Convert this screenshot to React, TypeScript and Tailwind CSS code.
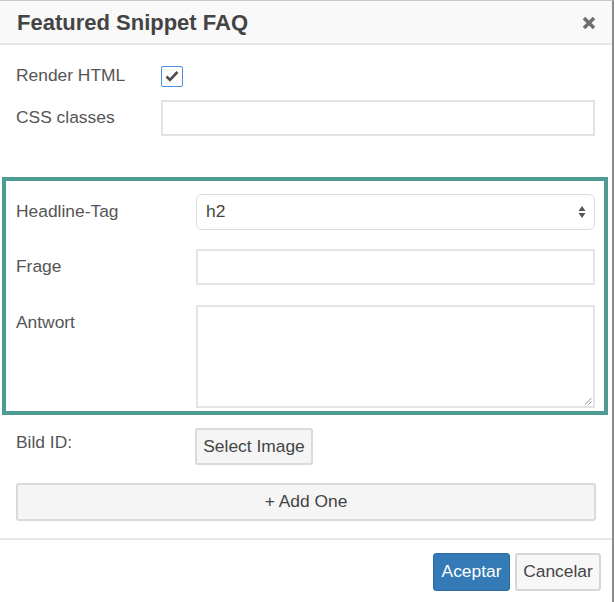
import React from "react";

const font = { fontFamily: '"Liberation Sans", Arial, Helvetica, sans-serif' };

export default function App() {
  return (
    <div
      className="w-[614px] h-[602px] bg-white border-t border-t-[#c9c9c9] border-r-2 border-r-[#8c8c8c] text-[#555] flex flex-col"
      style={font}
    >
      {/* header */}
      <div className="h-[44px] bg-[#f9f9f9] border-b-2 border-[#e6e6e6] flex items-center justify-between pl-[17px] pr-[16px] shrink-0">
        <h1 className="text-[22px] font-bold text-[#444] leading-none pt-[2px]">Featured Snippet FAQ</h1>
        <svg width="14" height="14" viewBox="0 0 14 14" className="mt-[1px]">
          <path d="M2 2 L12 12 M12 2 L2 12" stroke="#707070" strokeWidth="3.6" strokeLinecap="butt" />
        </svg>
      </div>

      {/* body */}
      <div className="flex flex-col pt-[20px]">
        <div className="flex items-center h-[22px] pl-[16px]">
          <label className="w-[145px] text-[17.4px] leading-none">Render HTML</label>
          <div className="w-[22px] h-[21px] border-[1.5px] border-[#4a90e2] rounded-[2px] flex items-center justify-center">
            <svg width="14" height="12" viewBox="0 0 14 12">
              <path d="M1.5 6.5 L5 10 L12.5 2" fill="none" stroke="#4d4d4d" strokeWidth="2.6" />
            </svg>
          </div>
        </div>

        <div className="flex items-center pl-[16px] mt-[13px]">
          <label className="w-[145px] text-[17.4px] leading-none">CSS classes</label>
          <div className="w-[434px] h-[36px] border-2 border-[#e2e2e2] bg-white" />
        </div>

        {/* teal box */}
        <div className="mt-[41px] ml-[2px] w-[606px] border-4 border-[#4e9d94] pt-[13px] pb-[3px] pl-[10px] pr-[9px] flex flex-col">
          <div className="flex items-start">
            <label className="w-[180px] h-[36px] flex items-center text-[17.4px] leading-none">Headline-Tag</label>
            <div className="w-[399px] h-[36px] border border-[#dcdcdc] rounded-[6px] flex items-center justify-between pl-[9px] pr-[8px] bg-white">
              <span className="text-[17.4px] text-[#444] leading-none">h2</span>
              <svg width="8" height="14" viewBox="0 0 8 14">
                <path d="M4 1 L7.5 6 L0.5 6 Z M0.5 8 L7.5 8 L4 13 Z" fill="#555" />
              </svg>
            </div>
          </div>
          <div className="flex items-start mt-[19px]">
            <label className="w-[180px] h-[36px] flex items-center text-[17.4px] leading-none">Frage</label>
            <div className="w-[399px] h-[36px] border-2 border-[#e4e4e4] bg-white" />
          </div>
          <div className="flex items-start mt-[20px]">
            <label className="w-[180px] h-[36px] flex items-center text-[17.4px] leading-none">Antwort</label>
            <div className="relative w-[399px] h-[103px] border-2 border-[#e4e4e4] bg-white">
              <svg width="8" height="8" viewBox="0 0 8 8" className="absolute right-[1px] bottom-[1px]">
                <path d="M7.5 1 L1 7.5 M7.5 4.5 L4.5 7.5" stroke="#888" strokeWidth="1" />
              </svg>
            </div>
          </div>
        </div>

        <div className="flex items-start pl-[16px] mt-[13px]">
          <label className="w-[179px] text-[17.4px] leading-none pt-[6px]">Bild ID:</label>
          <button className="w-[118px] h-[37px] border-2 border-[#dadada] rounded-[3px] bg-[#f5f5f5] text-[17.4px] text-[#444] leading-none">
            Select Image
          </button>
        </div>

        <div className="pl-[16px] mt-[18px]">
          <button className="w-[580px] h-[38px] border-2 border-[#dadada] rounded-[3px] bg-[#f5f5f5] text-[17.4px] text-[#444] leading-none">
            + Add One
          </button>
        </div>
      </div>

      {/* footer */}
      <div className="mt-[17px] border-t-2 border-[#e8e8e8] flex justify-end gap-[5px] pt-[13px] pr-[11px]">
        <button className="w-[77px] h-[38px] rounded-[3px] bg-[#337ab7] border border-[#2e6da4] text-white text-[17.4px] leading-none">
          Aceptar
        </button>
        <button className="w-[86px] h-[38px] rounded-[3px] bg-[#f7f7f7] border-2 border-[#d6d6d6] text-[#444] text-[17.4px] leading-none">
          Cancelar
        </button>
      </div>
    </div>
  );
}
